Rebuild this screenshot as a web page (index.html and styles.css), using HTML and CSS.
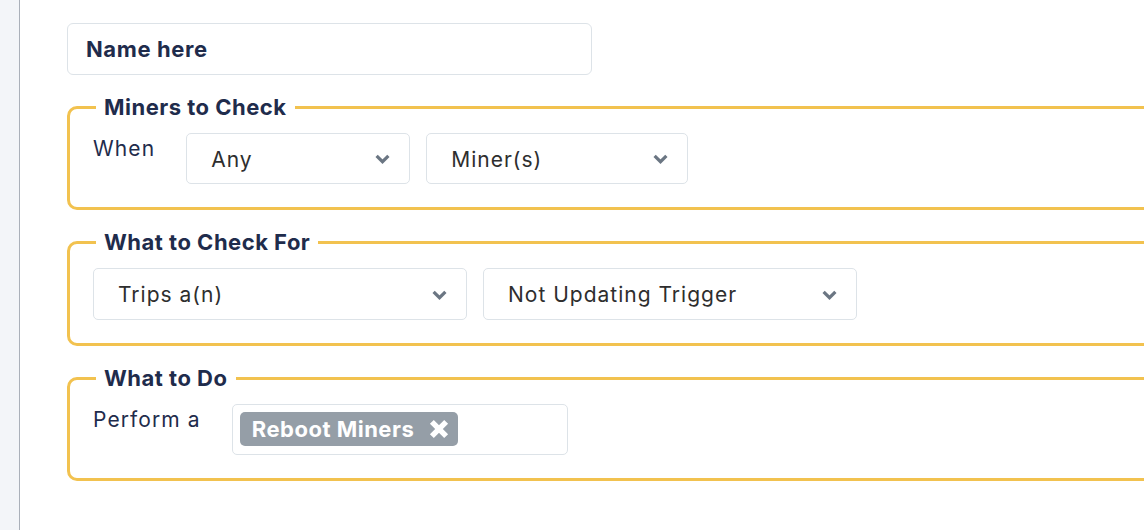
FILE: index.html
```html
<!DOCTYPE html>
<html>
<head>
<meta charset="utf-8">
<link rel="stylesheet" href="styles.css">
</head>
<body>
<div class="sidebar"></div>
<main class="main">
  <div class="form">
    <div class="name-input">Name here</div>

    <fieldset class="group">
      <legend>Miners to Check</legend>
      <div class="row">
        <span class="label">When</span>
        <div class="controls">
          <div class="select w-any"><span>Any</span><svg class="chev" viewBox="0 0 14 9"><path d="M1.5 1.5 7 7l5.5-5.5"/></svg></div>
          <div class="select w-miner"><span>Miner(s)</span><svg class="chev" viewBox="0 0 14 9"><path d="M1.5 1.5 7 7l5.5-5.5"/></svg></div>
        </div>
      </div>
    </fieldset>

    <fieldset class="group">
      <legend>What to Check For</legend>
      <div class="controls">
        <div class="select w-wide tall"><span>Trips a(n)</span><svg class="chev" viewBox="0 0 14 9"><path d="M1.5 1.5 7 7l5.5-5.5"/></svg></div>
        <div class="select w-wide tall"><span>Not Updating Trigger</span><svg class="chev" viewBox="0 0 14 9"><path d="M1.5 1.5 7 7l5.5-5.5"/></svg></div>
      </div>
    </fieldset>

    <fieldset class="group">
      <legend>What to Do</legend>
      <div class="row">
        <span class="label">Perform a</span>
        <div class="multi">
          <span class="chip">Reboot Miners<svg class="chip-x" viewBox="0 0 20 20"><path d="M3.5 3.5 16.5 16.5M16.5 3.5 3.5 16.5"/></svg></span>
        </div>
      </div>
    </fieldset>
  </div>
</main>
</body>
</html>
```

FILE: styles.css
```css
* { box-sizing: border-box; }
html, body { margin: 0; height: 100%; }
body {
  display: flex;
  background: #fff;
  overflow: hidden;
  font-family: "Inter", "Lato", sans-serif;
  color: #1f2c4c;
}
.sidebar {
  width: 20px;
  flex: none;
  background: #f3f5f9;
  border-right: 1px solid #aab0ba;
}
.main {
  flex: none;
  padding: 23px 0 0 47px;
}
.form {
  width: 1140px;
}
.name-input {
  width: 525px;
  height: 52px;
  border: 1px solid #dde3e8;
  border-radius: 6px;
  padding: 0 18px;
  display: flex;
  align-items: center;
  font-weight: 700;
  font-size: 22px;
  letter-spacing: 0.6px;
  color: #1f2c4c;
}
.group {
  margin: 20px 0 0;
  border: 3px solid #f2c24f;
  border-radius: 10px;
  padding: 14px 23px 23px 23px;
  min-width: 0;
}
.group legend {
  padding: 0 8px;
  margin-left: 3px;
  font-weight: 700;
  font-size: 22px;
  letter-spacing: 0.5px;
  line-height: 24px;
  color: #1f2c4c;
}
.row {
  display: flex;
  align-items: flex-start;
  gap: 31px;
}
.label {
  font-size: 21px;
  letter-spacing: 1.1px;
  line-height: 24px;
  padding-top: 4px;
  color: #1f2c4c;
}
.controls {
  display: flex;
  gap: 16px;
}
.select {
  height: 51px;
  border: 1px solid #dde3e8;
  border-radius: 5px;
  display: flex;
  align-items: center;
  justify-content: space-between;
  padding: 1px 19px 0 24px;
  font-size: 21px;
  letter-spacing: 1px;
  color: #2e2e2e;
}
.select.tall { height: 52px; }
.w-any { width: 224px; }
.w-miner { width: 262px; }
.w-wide { width: 374px; }
.chev {
  width: 15px;
  height: 10px;
  fill: none;
  stroke: #6b7683;
  stroke-width: 3;
}
.multi {
  width: 336px;
  height: 51px;
  border: 1px solid #dde3e8;
  border-radius: 5px;
  padding: 7px;
  display: flex;
  align-items: flex-start;
}
.chip {
  height: 34px;
  background: #959ea7;
  border-radius: 5px;
  color: #fff;
  font-weight: 700;
  font-size: 22px;
  letter-spacing: 0.5px;
  display: flex;
  align-items: center;
  gap: 14px;
  padding: 0 8px 0 12px;
}
.chip-x {
  width: 22px;
  height: 22px;
  fill: none;
  stroke: #fff;
  stroke-width: 5;
}
```
